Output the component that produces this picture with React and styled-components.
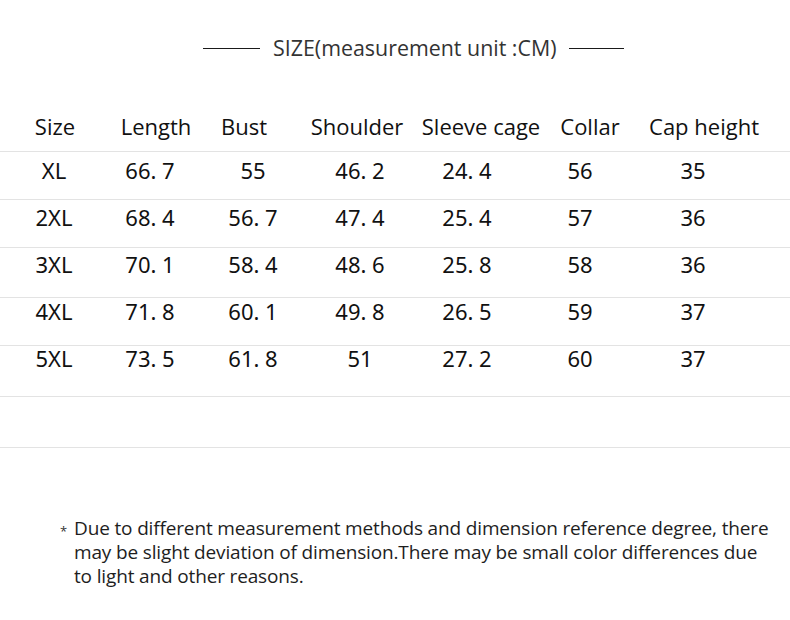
import React from 'react'
import styled, { createGlobalStyle } from 'styled-components'

const GlobalStyle = createGlobalStyle`
  body {
    margin: 0;
    background: #ffffff;
  }
`

const HEAD_COLS = '110px 92px 84px 142px 106px 112px 116px'
const DATA_COLS = '96px 96px 110px 104px 110px 116px 110px'

const headers = ['Size', 'Length', 'Bust', 'Shoulder', 'Sleeve cage', 'Collar', 'Cap height']

const rows = [
  { pad: 6, height: 48, cells: ['XL', '66. 7', '55', '46. 2', '24. 4', '56', '35'] },
  { pad: 5, height: 48, cells: ['2XL', '68. 4', '56. 7', '47. 4', '25. 4', '57', '36'] },
  { pad: 4, height: 50, cells: ['3XL', '70. 1', '58. 4', '48. 6', '25. 8', '58', '36'] },
  { pad: 1, height: 48, cells: ['4XL', '71. 8', '60. 1', '49. 8', '26. 5', '59', '37'] },
  { pad: 0, height: 51, cells: ['5XL', '73. 5', '61. 8', '51', '27. 2', '60', '37'] },
  { pad: 0, height: 51, cells: ['', '', '', '', '', '', ''] }
]

const noteLines = [
  'Due to different measurement methods and dimension reference degree, there',
  'may be slight deviation of dimension.There may be small color differences due',
  'to light and other reasons.'
]

const Page = styled.div`
  width: 790px;
  height: 620px;
  display: flex;
  flex-direction: column;
  background: #ffffff;
  overflow: hidden;
`

const TitleBar = styled.div`
  display: flex;
  align-items: center;
  gap: 13px;
  padding: 36px 0 0 203px;
  height: 24px;
`

const TitleRule = styled.div`
  width: ${(props) => props.width}px;
  height: 1px;
  background: #1a1a1a;
`

const Title = styled.h1`
  margin: 0;
  font-family: 'Open Sans', 'Liberation Sans', sans-serif;
  font-weight: 400;
  font-size: 21.4px;
  line-height: 24px;
  color: #333333;
  white-space: nowrap;
`

const Table = styled.div`
  margin-top: 40px;
  display: flex;
  flex-direction: column;
`

const HeadRow = styled.div`
  display: grid;
  grid-template-columns: ${HEAD_COLS};
  align-items: center;
  height: 51px;
  border-bottom: 1px solid #e3e3e3;
`

const HeadCell = styled.div`
  display: flex;
  justify-content: center;
  font-family: 'Open Sans', 'Liberation Sans', sans-serif;
  font-size: 22px;
  line-height: 30px;
  color: #111111;
  white-space: nowrap;
`

const DataRow = styled.div`
  display: grid;
  grid-template-columns: ${DATA_COLS};
  align-items: start;
  box-sizing: border-box;
  height: ${(props) => props.height}px;
  padding: ${(props) => props.pad}px 0 0 6px;
  border-bottom: 1px solid #e3e3e3;
`

const DataCell = styled.div`
  text-align: center;
  font-family: 'Noto Sans', 'Noto Sans CJK SC', sans-serif;
  font-size: 22px;
  line-height: 24px;
  color: #111111;
  white-space: pre;
`

const Note = styled.div`
  display: flex;
  align-items: flex-start;
  margin-top: 69px;
  padding-left: 60px;
`

const Star = styled.span`
  width: 14px;
  flex: none;
  font-family: 'Open Sans', 'Liberation Sans', sans-serif;
  font-size: 13px;
  line-height: 24px;
  padding-top: 2px;
  color: #333333;
`

const NoteText = styled.p`
  margin: 0;
  font-family: 'Open Sans', 'Liberation Sans', sans-serif;
  font-size: 19px;
  line-height: 23.8px;
  letter-spacing: -0.15px;
  color: #1e1e1e;
  white-space: nowrap;
`

export default function App() {
  return (
    <>
      <GlobalStyle />
      <Page>
        <TitleBar>
          <TitleRule width={57} />
          <Title>SIZE(measurement unit :CM)</Title>
          <TitleRule width={55} />
        </TitleBar>
        <Table>
          <HeadRow>
            {headers.map((h) => (
              <HeadCell key={h}>{h}</HeadCell>
            ))}
          </HeadRow>
          {rows.map((r, i) => (
            <DataRow key={i} pad={r.pad} height={r.height}>
              {r.cells.map((c, j) => (
                <DataCell key={j}>{c}</DataCell>
              ))}
            </DataRow>
          ))}
        </Table>
        <Note>
          <Star>*</Star>
          <NoteText>
            {noteLines.map((line, i) => (
              <React.Fragment key={i}>
                {line}
                {i < noteLines.length - 1 && <br />}
              </React.Fragment>
            ))}
          </NoteText>
        </Note>
      </Page>
    </>
  )
}
